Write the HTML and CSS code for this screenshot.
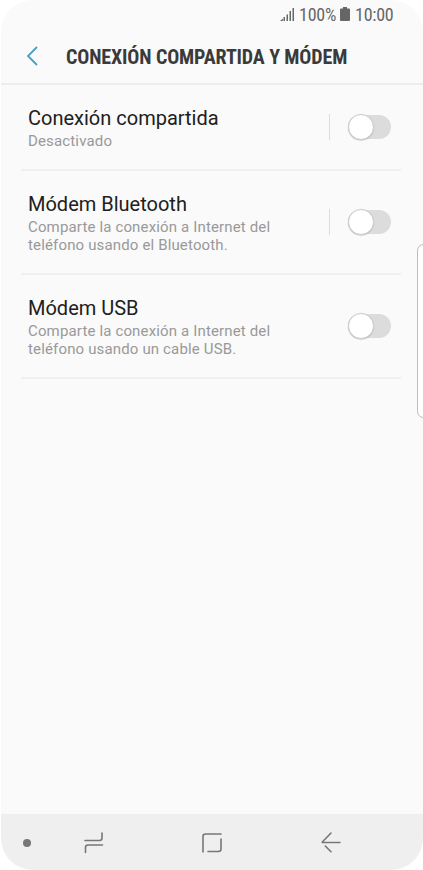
FILE: index.html
```html
<!DOCTYPE html>
<html lang="es">
<head>
<meta charset="utf-8">
<title>Conexión compartida y módem</title>
<link rel="stylesheet" href="styles.css">
</head>
<body>
<div class="screen">
  <div class="status">
    <svg class="signal" width="15" height="15" viewBox="0 0 15 15"><path d="M0 14h2.800v-2.400zM3.500 10h1.500v4H3.500zM6.500 7.500h1.500V14H6.500zM9.500 4h1.500v10H9.500zM12.500 1h1.500v13h-1.500z"/></svg>
    <span class="percent">100%</span>
    <svg class="battery" width="10" height="15" viewBox="0 0 10 15"><path d="M3 0h4v1.500h2q1 0 1 1V13q0 1-1 1H1q-1 0-1-1V2.500q0-1 1-1h2z"/></svg>
    <span class="time">10:00</span>
  </div>
  <header class="header">
    <svg class="back" width="12" height="20" viewBox="0 0 12 20"><path d="M11 1 2 10l9 9"/></svg>
    <h1>CONEXIÓN COMPARTIDA Y MÓDEM</h1>
  </header>
  <main class="list">
    <section class="item short">
      <div class="copy"><h2>Conexión compartida</h2><p>Desactivado</p></div>
      <i class="separator"></i><div class="switch"><i class="thumb"></i></div>
    </section>
    <section class="item">
      <div class="copy"><h2>Módem Bluetooth</h2><p>Comparte la conexión a Internet del<br>teléfono usando el Bluetooth.</p></div>
      <i class="separator"></i><div class="switch"><i class="thumb"></i></div>
    </section>
    <section class="item">
      <div class="copy"><h2>Módem USB</h2><p>Comparte la conexión a Internet del<br>teléfono usando un cable USB.</p></div>
      <div class="switch"><i class="thumb"></i></div>
    </section>
  </main>
  <nav class="nav">
    <i class="dot"></i>
    <svg class="recents" width="20" height="22" viewBox="0 0 20 22"><path d="M1 8.500h14.500q2.500 0 2.500-2.500V1M18.500 13H4q-2.500 0-2.500 2.500v5"/></svg>
    <svg class="home" width="20" height="20" viewBox="0 0 20 20"><path d="M1 19V3.500Q1 1 3.500 1H19M19 6v10q0 2.500-2.500 2.500H6"/></svg>
    <svg class="return" width="20" height="21" viewBox="0 0 20 21"><path d="M10 1 1.500 9.700q-.8.800.5.800h17M4.300 14 10 19.700"/></svg>
  </nav>
  <div class="edge"></div>
</div>
</body>
</html>
```
FILE: styles.css
```css
* { box-sizing: border-box; }
body { margin: 0; background: #fff; font-family: Roboto, sans-serif; }
h1, h2, p { margin: 0; font-weight: 400; }
svg { display: block; flex: none; }
.screen {
  position: relative;
  display: flex;
  flex-direction: column;
  width: 422px;
  height: 870px;
  margin-left: 1px;
  background: #fafafa;
  border-radius: 32px;
  overflow: hidden;
}
.status {
  display: flex;
  align-items: center;
  height: 29px;
  padding-left: 279px;
  color: #666;
  font-size: 18px;
  line-height: 29px;
  letter-spacing: -0.25px;
  font-stretch: 75%;
}
.signal, .battery { fill: #666; }
.percent { width: 37px; margin-left: 4px; }
.battery { margin-left: 4px; }
.time { margin-left: 5px; }
.header {
  display: flex;
  align-items: center;
  height: 56px;
  padding: 0 0 0 25px;
  border-bottom: 2px solid #ededed;
}
.back { fill: none; stroke: #499fc4; stroke-width: 1.8; }
h1 {
  margin-left: 28px;
  padding-top: 2px;
  color: #3a3a3a;
  font-size: 20px;
  font-weight: 700;
  font-stretch: 75%;
  letter-spacing: -0.13px;
  white-space: nowrap;
}
.list { flex: 1; padding: 0 22px 0 20px; }
.item {
  display: flex;
  align-items: center;
  height: 104px;
  padding: 0 10px 0 7px;
  border-bottom: 2px solid #f0f0f0;
}
.short { height: 86px; }
.copy { flex: 1; padding-top: 1px; }
h2 { padding-top: 1px; color: #202020; font-size: 20px; line-height: 25px; }
p {
  padding: 1px 0;
  color: #999;
  font-size: 15px;
  line-height: 18px;
  letter-spacing: 0.15px;
}
.separator { width: 1px; height: 26px; margin-right: 18px; background: #dcdcdc; }
.switch { width: 43px; height: 24px; border-radius: 12px; background: #dcdcdc; }
.thumb {
  display: block;
  width: 26px;
  height: 26px;
  margin-top: -1px;
  border-radius: 50%;
  background: #fff;
  border: 1px solid #cdcdcd;
  box-shadow: 0 0.5px 1px #bbb;
}
.nav {
  display: flex;
  align-items: center;
  height: 56px;
  padding: 1px 0 0 22px;
  background: #efefef;
}
.nav svg { fill: none; stroke: #777; stroke-width: 1.6; stroke-linecap: round; }
.dot { width: 8px; height: 8px; border-radius: 50%; background: #777; }
.recents { margin-left: 53px; }
.home { margin-left: 98px; }
.return { margin-left: 98.5px; }
.edge {
  position: absolute;
  top: 244px;
  right: -7px;
  width: 13px;
  height: 174px;
  border: 1px solid #bbb;
  border-radius: 7px;
  background: #fff;
}
```
